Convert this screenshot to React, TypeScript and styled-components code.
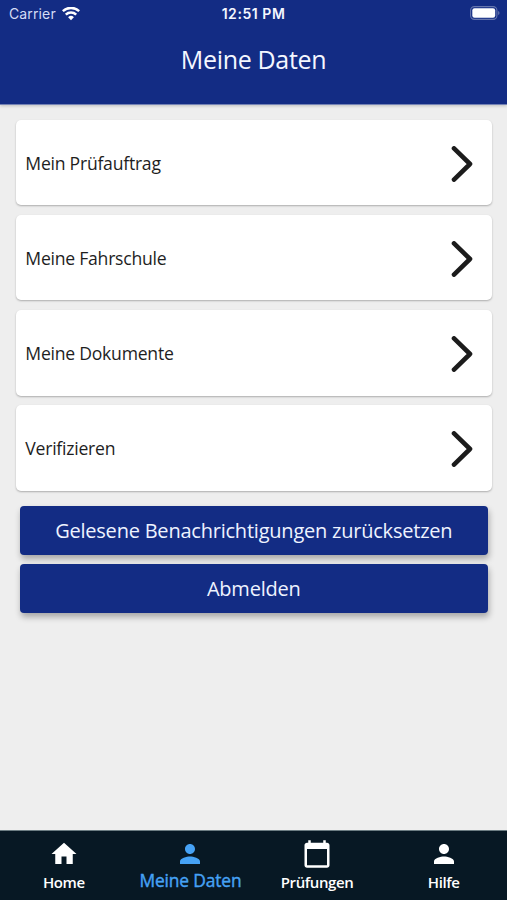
import React from 'react';
import styled, { createGlobalStyle } from 'styled-components';

const GlobalStyle = createGlobalStyle`
  * { box-sizing: border-box; }
  body { margin: 0; background: #eeeeee; font-family: 'Open Sans', sans-serif; }
`;

const Screen = styled.div`
  width: 507px;
  height: 900px;
  display: flex;
  flex-direction: column;
  overflow: hidden;
  background: #eeeeee;
`;

const Header = styled.header`
  height: 105px;
  flex: none;
  background: #132c84;
  color: #f4f7ff;
  border-bottom: 1px solid #7583b5;
  box-shadow: 0 1px 3px rgba(0, 0, 0, 0.2);
`;

const StatusBar = styled.div`
  height: 27px;
  padding: 0 7px 0 9px;
  display: grid;
  grid-template-columns: 1fr auto 1fr;
  align-items: center;
  font-family: Inter, sans-serif;
  font-size: 14px;
  line-height: 27px;
`;

const Carrier = styled.div`
  display: flex;
  align-items: center;
  gap: 6px;
  color: #d5dcf5;
  letter-spacing: 0.13px;
`;

const Clock = styled.div`
  margin-left: -2px;
  font-weight: 600;
  letter-spacing: 0.55px;
`;

const Battery = styled.svg`
  justify-self: end;
  margin-bottom: 1px;
`;

const Title = styled.h1`
  margin: 14px 0 0;
  font-size: 25px;
  letter-spacing: -0.33px;
  line-height: 36px;
  font-weight: 400;
  text-align: center;
`;

const Content = styled.main`
  flex: 1;
  padding: 14.5px 15px 0;
`;

const CardList = styled.div`
  display: grid;
  grid-auto-rows: 85.5px;
  row-gap: 9.8px;
`;

const Card = styled.div`
  display: flex;
  align-items: center;
  justify-content: space-between;
  margin-left: 0.5px;
  padding: 2.6px 19px 0 9.8px;
  border-radius: 5px;
  background: #ffffff;
  box-shadow: 0 1px 2px rgba(0, 0, 0, 0.28);
  color: #1e1e1e;
  font-size: 17.6px;
  letter-spacing: -0.24px;
`;

const CardLabel = styled.span`
  padding-bottom: 2px;
`;

const Actions = styled.div`
  display: grid;
  grid-auto-rows: 49px;
  row-gap: 9.5px;
  padding: 15px 4.5px 0 5px;
`;

const ActionButton = styled.button`
  border: 0;
  border-radius: 4px;
  padding: 0;
  background: #132c84;
  color: #eef3ff;
  box-shadow: 1px 4px 6px rgba(0, 0, 0, 0.3);
  font: 400 20px 'Open Sans', sans-serif;
  letter-spacing: -0.22px;
`;

const TabBar = styled.nav`
  height: 70px;
  flex: none;
  display: grid;
  grid-template-columns: repeat(4, 1fr);
  padding-left: 0.5px;
  background: #071824;
  border-top: 1px solid #6c7d83;
`;

const Tab = styled.div<{ $active?: boolean }>`
  display: flex;
  flex-direction: column;
  align-items: center;
  padding-top: 8px;
  color: ${(p) => (p.$active ? '#46a2f5' : '#ffffff')};
`;

const TabLabel = styled.span<{ $active?: boolean }>`
  margin-top: ${(p) => (p.$active ? '1px' : '3px')};
  font-size: ${(p) => (p.$active ? '17.4px' : '15px')};
  letter-spacing: ${(p) => (p.$active ? '-0.15px' : '-0.4px')};
  line-height: ${(p) => (p.$active ? '20px' : '20px')};
  font-weight: ${(p) => (p.$active ? 400 : 600)};
  -webkit-text-stroke: ${(p) => (p.$active ? '0.4px' : '0')} currentColor;
  white-space: nowrap;
`;

const HOME = 'M10 20v-6h4v6h5v-8h3L12 3 2 12h3v8z';
const PERSON =
  'M12 12c2.21 0 4-1.79 4-4s-1.79-4-4-4-4 1.79-4 4 1.79 4 4 4zm0 2c-2.67 0-8 1.34-8 4v2h16v-2c0-2.66-5.33-4-8-4z';
const CALENDAR =
  'M20 3h-1V1h-2v2H7V1H5v2H4c-1.1 0-2 .9-2 2v16c0 1.1.9 2 2 2h16c1.1 0 2-.9 2-2V5c0-1.1-.9-2-2-2zm0 18H4V8h16v13z';

const entries = ['Mein Prüfauftrag', 'Meine Fahrschule', 'Meine Dokumente', 'Verifizieren'];
const actions = ['Gelesene Benachrichtigungen zurücksetzen', 'Abmelden'];
const tabs = [
  { label: 'Home', icon: HOME },
  { label: 'Meine Daten', icon: PERSON, active: true },
  { label: 'Prüfungen', icon: CALENDAR },
  { label: 'Hilfe', icon: PERSON },
];

const WifiIcon = () => (
  <svg width="18" height="14" viewBox="0 0 18 14" fill="none" stroke="#fff" strokeWidth="2.5">
    <path d="M.8 4.2a11.8 11.8 0 0 1 16.4 0" />
    <path d="M3.8 7.6a7.5 7.5 0 0 1 10.4 0" />
    <path d="M9 13.2 6.1 10.3a4.1 4.1 0 0 1 5.8 0z" fill="#fff" stroke="none" />
  </svg>
);

const BatteryIcon = () => (
  <Battery width="30" height="14" viewBox="0 0 30 14">
    <rect x=".6" y=".6" width="26.3" height="12.8" rx="3.8" fill="none" stroke="#6676ae" strokeWidth="1.1" />
    <rect x="2.3" y="2.3" width="22.9" height="9.4" rx="2.2" fill="#fff" />
    <path d="M28.1 5v4c1.9-.7 1.9-3.3 0-4z" fill="#6676ae" />
  </Battery>
);

const Chevron = () => (
  <svg width="22" height="36" viewBox="0 0 22 36" fill="none" stroke="#1c1c1c" strokeWidth="4.6" strokeLinecap="round" strokeLinejoin="round">
    <path d="M3 2.4 19 18 3 33.6" />
  </svg>
);

export default function App() {
  return (
    <Screen>
      <GlobalStyle />
      <Header>
        <StatusBar>
          <Carrier>
            Carrier
            <WifiIcon />
          </Carrier>
          <Clock>12:51 PM</Clock>
          <BatteryIcon />
        </StatusBar>
        <Title>Meine Daten</Title>
      </Header>
      <Content>
        <CardList>
          {entries.map((entry) => (
            <Card key={entry}>
              <CardLabel>{entry}</CardLabel>
              <Chevron />
            </Card>
          ))}
        </CardList>
        <Actions>
          {actions.map((action) => (
            <ActionButton key={action}>{action}</ActionButton>
          ))}
        </Actions>
      </Content>
      <TabBar>
        {tabs.map((tab) => (
          <Tab key={tab.label} $active={tab.active}>
            <svg width="30" height="30" viewBox="0 0 24 24" fill="currentColor">
              <path d={tab.icon} />
            </svg>
            <TabLabel $active={tab.active}>{tab.label}</TabLabel>
          </Tab>
        ))}
      </TabBar>
    </Screen>
  );
}
